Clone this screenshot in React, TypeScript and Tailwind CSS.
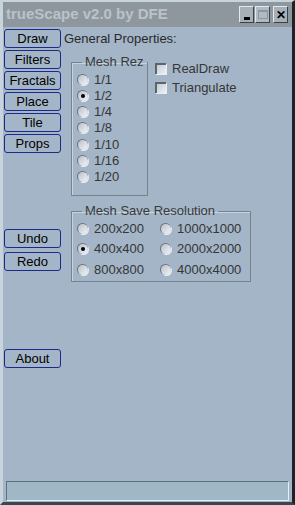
import React from "react"

const font = { fontFamily: '"Liberation Sans", Arial, sans-serif' }

function Btn({ label, className = "" }: { label: string; className?: string }) {
  return (
    <div
      className={`flex h-[19px] w-[57px] items-center justify-center rounded-[3px] border border-[#1a2a8c] text-[13px] leading-none text-black ${className}`}
    >
      {label}
    </div>
  )
}

function Radio({ label, checked = false }: { label: string; checked?: boolean }) {
  return (
    <div className="flex h-[16px] items-center text-[13px] leading-none text-[#363636]">
      <span className="flex h-[11px] w-[11px] items-center justify-center rounded-full border-l border-t border-[#6a737c] bg-gradient-to-br from-[#b8c0c8] to-[#f4f6f8] shadow-[1px_1px_0_#e8eef4]">
        {checked && <span className="h-[4px] w-[4px] rounded-full bg-black" />}
      </span>
      <span className="ml-[6px]">{label}</span>
    </div>
  )
}

function Check({ label }: { label: string }) {
  return (
    <div className="flex h-[19px] items-center text-[13px] leading-none text-[#363636]">
      <span className="h-[11px] w-[11px] border-l-2 border-t-2 border-[#5c646c] bg-gradient-to-br from-[#c4ccd4] to-[#eef2f6] shadow-[1px_1px_0_#e8eef4]" />
      <span className="ml-[6px]">{label}</span>
    </div>
  )
}

function TitleBtn({ children, className = "" }: { children: React.ReactNode; className?: string }) {
  return (
    <div
      className={`flex h-[17px] w-[15px] items-center justify-center border border-t-[#e4e8ec] border-l-[#e4e8ec] border-r-[#3c4248] border-b-[#3c4248] bg-[#a6b0b8] ${className}`}
    >
      {children}
    </div>
  )
}

export default function App() {
  return (
    <div
      style={font}
      className="flex h-[505px] w-[295px] flex-col border-l-[3px] border-t-[2px] border-r-[3px] border-b-[3px] border-l-[#c8d4dc] border-t-[#c8d4dc] border-r-[#1c2228] border-b-[#3a464e] bg-[#a3b5c7]"
    >
      {/* title bar */}
      <div className="flex h-[25px] items-center justify-between bg-[#8e979e] pl-[3px] pr-[4px]">
        <span className="text-[15px] font-bold text-[#bac2ca]">trueScape v2.0 by DFE</span>
        <div className="flex items-center gap-[1px]">
          <TitleBtn>
            <span className="mt-[7px] h-[3px] w-[6px] bg-black" />
          </TitleBtn>
          <TitleBtn className="bg-[#b0bac2]">
            <span className="h-[9px] w-[10px] border border-t-2 border-[#8a96a0]" />
          </TitleBtn>
          <TitleBtn className="ml-[2px] text-[12px] font-bold leading-none text-black">
            ✕
          </TitleBtn>
        </div>
      </div>

      <div className="flex flex-1">
        {/* left buttons */}
        <div className="ml-[1px] mt-[2px] flex flex-col">
          <div className="flex flex-col gap-[2px]">
            <Btn label="Draw" />
            <Btn label="Filters" />
            <Btn label="Fractals" />
            <Btn label="Place" />
            <Btn label="Tile" />
            <Btn label="Props" />
          </div>
          <Btn label="Undo" className="mt-[76px]" />
          <Btn label="Redo" className="mt-[4px]" />
          <Btn label="About" className="mt-[78px]" />
        </div>

        {/* right side */}
        <div className="ml-[3px] flex flex-col">
          <div className="mt-[4px] text-[13px] leading-[15px] text-[#2a2a2a]">General Properties:</div>

          <div className="mt-[9px] flex">
            <fieldset className="ml-[7px] h-[141px] w-[77px] border border-[#74848f] pl-[5px] pt-[2px] shadow-[inset_1px_1px_0_#c6d4e0]">
              <legend className="ml-[5px] px-[3px] text-[13px] leading-[14px] text-[#3a3a3a]">Mesh Rez</legend>
              <div className="flex flex-col gap-[0.3px]">
                <Radio label="1/1" />
                <Radio label="1/2" checked />
                <Radio label="1/4" />
                <Radio label="1/8" />
                <Radio label="1/10" />
                <Radio label="1/16" />
                <Radio label="1/20" />
              </div>
            </fieldset>
            <div className="ml-[7px] mt-[4px] flex flex-col">
              <Check label="RealDraw" />
              <Check label="Triangulate" />
            </div>
          </div>

          <fieldset className="ml-[7px] mt-[8px] h-[78px] w-[180px] border border-[#74848f] pl-[5px] pt-[2px] shadow-[inset_1px_1px_0_#c6d4e0]">
            <legend className="ml-[5px] px-[3px] text-[13px] leading-[14px] text-[#3a3a3a]">Mesh Save Resolution</legend>
            <div className="grid grid-cols-[83px_1fr] gap-y-[4.5px]">
              <Radio label="200x200" />
              <Radio label="1000x1000" />
              <Radio label="400x400" checked />
              <Radio label="2000x2000" />
              <Radio label="800x800" />
              <Radio label="4000x4000" />
            </div>
          </fieldset>
        </div>
      </div>

      {/* status bar */}
      <div className="mx-[3px] mb-[1px] h-[20px] border border-t-[#5c7280] border-l-[#5c7280] border-r-[#e4eef4] border-b-[#e4eef4] bg-[#a0b8c6]" />
    </div>
  )
}
